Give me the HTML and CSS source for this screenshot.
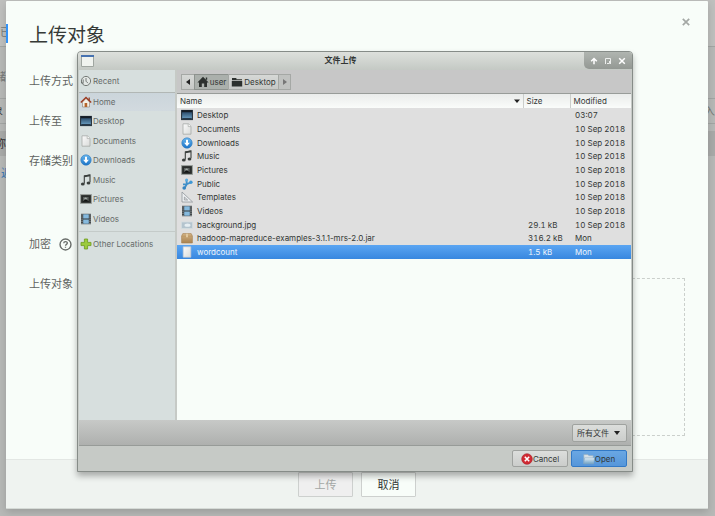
FILE: index.html
```html
<!DOCTYPE html>
<html lang="zh-CN">
<head>
<meta charset="utf-8">
<title>上传对象</title>
<link rel="stylesheet" href="styles.css">
</head>
<body>
<svg class="defs" aria-hidden="true">
  <defs>
    <linearGradient id="g-blue" x1="0" y1="0" x2="0" y2="1"><stop offset="0" stop-color="#67b6ee"/><stop offset="1" stop-color="#1b73c8"/></linearGradient>
    <linearGradient id="g-screen" x1="0" y1="0" x2="0" y2="1"><stop offset="0" stop-color="#1d3a58"/><stop offset="1" stop-color="#72a8cc"/></linearGradient>
    <linearGradient id="g-paper" x1="0" y1="0" x2="1" y2="1"><stop offset="0" stop-color="#fbfbfb"/><stop offset="1" stop-color="#d9dbd9"/></linearGradient>
    <linearGradient id="g-box" x1="0" y1="0" x2="0" y2="1"><stop offset="0" stop-color="#d2b284"/><stop offset="1" stop-color="#a98250"/></linearGradient>
    <linearGradient id="g-folder" x1="0" y1="0" x2="0" y2="1"><stop offset="0" stop-color="#e4eef4"/><stop offset="1" stop-color="#6ea3c8"/></linearGradient>
    <symbol id="i-recent" viewBox="0 0 12 12"><circle cx="6" cy="6" r="4.6" fill="#e4e8e6" stroke="#757a77"/><path d="M6 3v3.2l2 2M3.2 4.4v3.4M1 7.5l2.6.8" fill="none" stroke="#5b605d" stroke-width=".8"/></symbol>
    <symbol id="i-home" viewBox="0 0 12 12"><path d="M2.5 6v5h7V6L6 2.4z" fill="#f4efe6" stroke="#8c7b70" stroke-width=".6"/><path d="M8.6 1.5h1.2v3H8.6z" fill="#8b3a24"/><path d="M.8 6.6 6 1.4l5.2 5.2" fill="none" stroke="#9c3b22" stroke-width="1.4"/><path d="M4.6 7h2.6v4H4.6z" fill="#b5642c"/></symbol>
    <symbol id="i-desktop" viewBox="0 0 12 12"><rect x=".6" y="1.4" width="10.8" height="9.2" fill="url(#g-screen)" stroke="#1e2a35"/><path d="M1 1.2h10v2H1z" fill="#151d26"/><path d="M1.2 9h9.6v1.2H1.2z" fill="#26394a"/></symbol>
    <symbol id="i-doc" viewBox="0 0 12 12"><path d="M2 .8h5.4L10 3.4v7.8H2z" fill="url(#g-paper)" stroke="#a6aaa7" stroke-width=".8"/><path d="M7.2.9v2.7h2.7" fill="#fff" stroke="#a6aaa7" stroke-width=".7"/></symbol>
    <symbol id="i-download" viewBox="0 0 12 12"><circle cx="6" cy="6" r="5.2" fill="url(#g-blue)" stroke="#2c79be" stroke-width=".6"/><path d="M5 2.8h2v3h1.9L6 9.2 3.1 5.8H5z" fill="#fff"/></symbol>
    <symbol id="i-music" viewBox="0 0 12 12"><path d="M4.3 9.6V2L10 .9v7.4" fill="none" stroke="#3a3f3d" stroke-width="1.1"/><path d="M4.3 2.4 10 1.3" stroke="#3a3f3d" stroke-width="1.8"/><ellipse cx="2.8" cy="10" rx="1.9" ry="1.5" fill="#3a3f3d"/><ellipse cx="8.5" cy="8.9" rx="1.9" ry="1.5" fill="#3a3f3d"/></symbol>
    <symbol id="i-pic" viewBox="0 0 12 12"><rect x=".6" y="1.6" width="10.8" height="8.8" fill="#2a2d2c" stroke="#9ba09d"/><path d="M3 4h5.6v4H3z" fill="#5a605e"/><circle cx="5.6" cy="5.6" r="1.2" fill="#a5aba8"/><path d="m2.6 8.6 3-2.4 3.6 2.4z" fill="#101211"/></symbol>
    <symbol id="i-public" viewBox="0 0 12 12"><path d="M3.4 10.4 5.8 6.2 10 4.2M5.4 1.6 5.8 6.2M2 6.4l3.8-.2" fill="none" stroke="#3f8fc9" stroke-width="1.8"/><circle cx="5.6" cy="1.9" r="1.5" fill="#5aaee3"/><circle cx="9.9" cy="4.2" r="1.7" fill="#3f97d4"/><circle cx="3.2" cy="10" r="1.8" fill="#3584c0"/></symbol>
    <symbol id="i-template" viewBox="0 0 12 12"><path d="M1 1v10h10.6z" fill="#eceef0" stroke="#8f959b" stroke-width=".8"/><path d="M3.4 6v3h3.3z" fill="#dfdfdf" stroke="#8f959b" stroke-width=".7"/></symbol>
    <symbol id="i-video" viewBox="0 0 12 12"><path d="M1 .8h10v10.4H1z" fill="#343a3d"/><path d="M3.2 1.2h5.6v4.2H3.2zM3.2 6.4h5.6v4.4H3.2z" fill="#86bade"/><path d="M2 1.4v9.6M10 1.4v9.6" stroke="#d5dadb" stroke-width=".9" stroke-dasharray="1.1 1"/></symbol>
    <symbol id="i-image" viewBox="0 0 12 12"><rect x=".5" y="3" width="11" height="6.4" fill="#b4c4ce" stroke="#d3dce0" stroke-width=".8"/><ellipse cx="6.5" cy="6.2" rx="3" ry="1.6" fill="#e6eef2"/></symbol>
    <symbol id="i-jar" viewBox="0 0 12 12"><path d="M1.8 1.6h8.4L11.4 4v7H.6V4z" fill="url(#g-box)" stroke="#a5804f" stroke-width=".6"/><path d="M.8 4.2h10.4" stroke="#b9935f" stroke-width=".7"/><path d="M5 1.7h2v3.6H5z" fill="#e0c79e"/></symbol>
    <symbol id="i-file" viewBox="0 0 12 12"><path d="M2.2.8h7.6v10.4H2.2z" fill="url(#g-paper)" stroke="#c5ccd2" stroke-width=".7"/></symbol>
    <symbol id="i-plus" viewBox="0 0 12 12"><path d="M4.4 1h3.2v3.4H11v3.2H7.6V11H4.4V7.6H1V4.4h3.4z" fill="#9ccb3c" stroke="#6c9a1c" stroke-width=".8"/></symbol>
    <symbol id="i-house" viewBox="0 0 12 12"><path d="M6 .8 11.6 6.4H10V11H7.2V7.6H4.8V11H2V6.4H.4zM8.8 1.4h1.4v2.4H8.8z" fill="#2c302e"/></symbol>
    <symbol id="i-folder" viewBox="0 0 12 12"><path d="M1 2h4.4v1.2H11v1H1zM.8 5h10.4v5.6H.8z" fill="#2c302e"/></symbol>
    <symbol id="i-cancel" viewBox="0 0 12 12"><circle cx="6" cy="6" r="5.3" fill="#d12a33" stroke="#a81d26" stroke-width=".6"/><path d="m3.8 3.8 4.4 4.4m0-4.4L3.8 8.2" stroke="#fff" stroke-width="1.6"/></symbol>
    <symbol id="i-open" viewBox="0 0 12 12"><path d="M.8 1.4h4l1 1.2h4.4v8H.8z" fill="#d5dfe5" stroke="#8ba9bf" stroke-width=".6"/><path d="M1.6 4.8h10l-.8 6H.9z" fill="url(#g-folder)" stroke="#78a1c0" stroke-width=".5"/></symbol>
  </defs>
</svg>

<div class="page" aria-hidden="true">
  <div class="page-row page-tabs"><span>已</span></div>
  <div class="page-row page-info"><span>储</span></div>
  <div class="page-row page-nav"><span>象</span><span class="page-end">入</span></div>
  <div class="page-row page-head"><span>称</span></div>
  <div class="page-row page-link"><span>返</span></div>
</div>

<section class="modal" aria-labelledby="modal-title">
  <div class="modal-body">
    <header class="modal-header">
      <h1 id="modal-title">上传对象</h1>
      <button class="modal-close" type="button" aria-label="关闭"><svg viewBox="0 0 8 8"><path d="m.8.8 6.4 6.4m0-6.4L.8 7.2" stroke="#a4a8a5" stroke-width="1.7"/></svg></button>
    </header>
    <div class="form-row">上传方式</div>
    <div class="form-row">上传至</div>
    <div class="form-row form-row-class">存储类别</div>
    <div class="form-row">加密
      <svg class="help" viewBox="0 0 14 14"><circle cx="7" cy="7" r="5.9" fill="none" stroke="#686c69" stroke-width="1.5"/><path d="M5.1 5.7c0-2.5 3.9-2.4 3.9-.2C9 6.9 7 6.9 7 8.4M7 9.3v1.3" fill="none" stroke="#686c69" stroke-width="1.4"/></svg>
    </div>
    <div class="form-row form-drop"><span>上传对象</span><div class="drop-zone"></div></div>
  </div>
  <footer class="modal-footer">
    <button class="action" type="button" disabled>上传</button>
    <button class="action" type="button">取消</button>
  </footer>
</section>

<section class="window" aria-labelledby="window-title">
  <header class="titlebar">
    <svg class="app-icon" viewBox="0 0 13 12"><path d="M.5.5h12v11H.5z" fill="#f0f3ef" stroke="#a0a6a1"/><path d="M0 0h13v2H0z" fill="#4672b0"/></svg>
    <h2 id="window-title">文件上传</h2>
    <div class="window-controls">
      <button type="button" aria-label="收起"><svg viewBox="0 0 8 8"><path d="M4 1.3v6M1.2 4.2 4 1.5l2.8 2.7" fill="none" stroke="#fff" stroke-width="1.5"/></svg></button>
      <button type="button" aria-label="最大化"><svg viewBox="0 0 8 8"><path d="M1.5 7V1.5h5V7M3 6.5h2.5V4" fill="none" stroke="#eceeec"/></svg></button>
      <button type="button" aria-label="关闭"><svg viewBox="0 0 8 8"><path d="m1.2 1.2 5.6 5.6m0-5.6L1.2 6.8" stroke="#fff" stroke-width="1.5"/></svg></button>
    </div>
  </header>
  <div class="browser">
    <nav class="places">
      <a class="place place-recent" href="#"><svg><use href="#i-recent"/></svg>Recent</a>
      <a class="place place-current" href="#"><svg><use href="#i-home"/></svg>Home</a>
      <a class="place" href="#"><svg><use href="#i-desktop"/></svg>Desktop</a>
      <a class="place" href="#"><svg><use href="#i-doc"/></svg>Documents</a>
      <a class="place" href="#"><svg><use href="#i-download"/></svg>Downloads</a>
      <a class="place" href="#"><svg><use href="#i-music"/></svg>Music</a>
      <a class="place" href="#"><svg><use href="#i-pic"/></svg>Pictures</a>
      <a class="place" href="#"><svg><use href="#i-video"/></svg>Videos</a>
      <a class="place place-other" href="#"><svg><use href="#i-plus"/></svg>Other Locations</a>
    </nav>
    <div class="files">
      <div class="pathbar">
        <button class="step" type="button" aria-label="后退"><svg class="tri" viewBox="0 0 6 6"><path d="M5 0v6L1 3z" fill="#222"/></svg></button>
        <button class="crumb crumb-active" type="button"><svg><use href="#i-house"/></svg>user</button>
        <button class="crumb" type="button"><svg><use href="#i-folder"/></svg>Desktop</button>
        <button class="step step-off" type="button" aria-label="前进"><svg class="tri" viewBox="0 0 6 6"><path d="M1 0v6l4-3z" fill="#777"/></svg></button>
      </div>
      <table>
        <colgroup><col><col class="col-size"><col class="col-date"></colgroup>
        <thead><tr><th><div class="sort">Name<svg class="tri" viewBox="0 0 6 6"><path d="M0 1.5h6L3 5z" fill="#222"/></svg></div></th><th>Size</th><th>Modified</th></tr></thead>
        <tbody>
          <tr><td><div class="name"><svg><use href="#i-desktop"/></svg>Desktop</div></td><td></td><td>03:07</td></tr>
          <tr><td><div class="name"><svg><use href="#i-doc"/></svg>Documents</div></td><td></td><td>10 Sep 2018</td></tr>
          <tr><td><div class="name"><svg><use href="#i-download"/></svg>Downloads</div></td><td></td><td>10 Sep 2018</td></tr>
          <tr><td><div class="name"><svg><use href="#i-music"/></svg>Music</div></td><td></td><td>10 Sep 2018</td></tr>
          <tr><td><div class="name"><svg><use href="#i-pic"/></svg>Pictures</div></td><td></td><td>10 Sep 2018</td></tr>
          <tr><td><div class="name"><svg><use href="#i-public"/></svg>Public</div></td><td></td><td>10 Sep 2018</td></tr>
          <tr><td><div class="name"><svg><use href="#i-template"/></svg>Templates</div></td><td></td><td>10 Sep 2018</td></tr>
          <tr><td><div class="name"><svg><use href="#i-video"/></svg>Videos</div></td><td></td><td>10 Sep 2018</td></tr>
          <tr><td><div class="name"><svg><use href="#i-image"/></svg>background.jpg</div></td><td>29.1 kB</td><td>10 Sep 2018</td></tr>
          <tr><td><div class="name"><svg><use href="#i-jar"/></svg>hadoop-mapreduce-examples-3.1.1-mrs-2.0.jar</div></td><td>316.2 kB</td><td>Mon</td></tr>
          <tr class="selected"><td><div class="name"><svg><use href="#i-file"/></svg>wordcount</div></td><td>1.5 kB</td><td>Mon</td></tr>
        </tbody>
      </table>
    </div>
  </div>
  <div class="filterbar">
    <div class="filter"><select aria-label="文件类型"><option>所有文件</option></select><svg class="tri" viewBox="0 0 6 6"><path d="M0 1h6L3 5z" fill="#222"/></svg></div>
  </div>
  <footer class="window-footer">
    <button class="dialog-button" type="button"><svg><use href="#i-cancel"/></svg>Cancel</button>
    <button class="dialog-button dialog-primary" type="button"><svg><use href="#i-open"/></svg>Open</button>
  </footer>
</section>
</body>
</html>
```
FILE: styles.css
```css
* { box-sizing: border-box; }

html, body { height: 100%; }

body {
  margin: 0;
  position: relative;
  overflow: hidden;
  background: #b7b9b7;
  color: #5f6360;
  font: 11px/16px "Liberation Sans", "Noto Sans CJK SC", sans-serif;
}

h1, h2 { margin: 0; font-weight: 400; }
button, select { font: inherit; color: inherit; margin: 0; padding: 0; border: 0; background: none; }
a { color: inherit; text-decoration: none; }
svg { display: block; flex: none; }
.defs { position: absolute; width: 0; height: 0; }

/* Page behind the modal */
.page { color: #777a78; }
.page-row { display: flex; align-items: center; border-bottom: 1px solid #a3a6a4; }
.page-row span { margin-left: -5px; }
.page-row .page-end { margin: 0 0 0 auto; }
.page-tabs { height: 47px; padding-top: 18px; background: #bfc0be; }
.page-tabs span { margin-left: 0; }
.page-info { height: 52px; padding-top: 8px; }
.page-nav { height: 25px; color: #333; }
.page-nav span { margin-left: -8px; }
.page-nav .page-end { color: #777a78; }
.page-head { height: 25px; margin-top: 7px; border: 0; background: #a9aba9; color: #333; }
.page-link { height: 34px; border: 0; color: #3274b5; }
.page-link span { margin-left: 1px; }

/* Upload modal */
.modal {
  position: absolute;
  inset: 1px 7px 7px 6px;
  display: flex;
  flex-direction: column;
  background: #f8fdf9;
  border-bottom: 1px solid #d5dad6;
  border-radius: 1px;
  box-shadow: 0 3px 8px rgba(0, 0, 0, .16);
}
.modal::before {
  content: "";
  position: absolute;
  left: 0;
  top: 23px;
  width: 2px;
  height: 19px;
  background: #3293f8;
}
.modal-body { flex: 1; display: flex; flex-direction: column; padding: 13px 23px 23px; }
.modal-header { display: flex; justify-content: space-between; margin-bottom: 15px; }
.modal-header h1 { padding-top: 8px; color: #363a37; font-size: 19px; line-height: 28px; }
.modal-close { width: 16px; height: 16px; margin-right: -9px; padding: 4px; }
.modal-close svg { width: 8px; height: 8px; }
.form-row { display: flex; gap: 8px; height: 40px; line-height: 32px; }
.form-row-class { height: 83px; }
.help { width: 13px; height: 13px; margin-top: 10px; }
.form-drop { flex: 1; height: auto; gap: 28px; }
.drop-zone { flex: 1; margin-top: 10px; border: 1px dashed #cbd0cc; }
.modal-footer {
  display: flex;
  justify-content: center;
  align-items: flex-start;
  gap: 8px;
  height: 49px;
  padding-top: 12px;
  background: #eff3f0;
  border-top: 1px solid #e3e7e4;
}
.action { width: 55px; height: 25px; border: 1px solid #cdd0ce; border-radius: 1px; background: #f8fdf9; color: #333735; }
.action:disabled { background: #efefef; color: #a4a7a5; }

/* File chooser window */
.window {
  position: absolute;
  inset: 51px 82px 44px 77px;
  display: flex;
  flex-direction: column;
  padding: 0 1px;
  border: 1px solid #868c88;
  border-radius: 4px 4px 0 0;
  background: #c6cac6;
  color: #333735;
  font: 8px/12px Inter, "Liberation Sans", "Noto Sans CJK SC", sans-serif;
  box-shadow: 0 4px 6px rgba(0, 0, 0, .3);
}
.window svg { width: 12px; height: 12px; }
.window .tri { width: 6px; height: 6px; }
.titlebar {
  display: grid;
  grid-template-columns: auto 1fr auto;
  height: 18px;
  margin: 0 -1px;
  background: linear-gradient(#dde0dc, #c4c9c4);
  border-radius: 3px 3px 0 0;
}
.window .app-icon { width: 13px; margin: 3px; }
.titlebar h2 { font-size: 8px; font-weight: 700; line-height: 17px; text-align: center; }
.window-controls {
  display: flex;
  justify-content: center;
  gap: 6px;
  width: 48px;
  height: 17px;
  padding-top: 5px;
  border-radius: 0 3px 0 5px;
  background: linear-gradient(#b0b5b0, #939893);
}
.window-controls button, .window .window-controls svg { width: 8px; height: 8px; }
.browser { flex: 1; display: flex; gap: 2px; min-height: 0; }

.places { width: 96px; background: #d7dfde; color: #666b69; }
.place { display: flex; align-items: center; gap: 1px; height: 20px; padding-left: 1px; }
.place:nth-child(even) { height: 19px; }
.place.place-recent { height: 23px; border-bottom: 1px solid #b1b7b5; }
.place.place-current { height: 18px; background: linear-gradient(#cbd5db, #d2dadf); }
.place.place-other { height: 25px; margin-top: 3px; border-top: 1px solid #c4cbc9; }

.files { flex: 1; display: flex; flex-direction: column; background: #f8fdf9; min-width: 0; }
.pathbar { display: flex; height: 24px; padding: 4px; background: #c7c7c7; border-bottom: 1px solid #989c99; }
.pathbar button {
  display: flex;
  align-items: center;
  justify-content: center;
  gap: 1px;
  height: 16px;
  border: 1px solid #a5a8a5;
  border-right: 0;
  background: linear-gradient(#d6d8d6, #c6c8c6);
}
.pathbar .step { width: 13px; }
.pathbar .crumb { width: 50px; }
.pathbar .crumb-active { width: 34px; background: #abb0ac; border-color: #8d928e; }
.pathbar .step-off { border-right: 1px solid #a5a8a5; background: #c0c2c0; }

table { width: 100%; table-layout: fixed; border-collapse: collapse; }
.col-size { width: 47px; }
.col-date { width: 61px; }
th { height: 14px; padding: 0 3px; background: linear-gradient(#eaeceb, #fafcfa); font-weight: 400; text-align: left; }
th + th { border-left: 1px solid #cbcecb; }
.sort { display: flex; align-items: center; justify-content: space-between; }
tbody tr { height: 14px; background: #dfdfdf; }
tbody tr:nth-child(3n) { height: 13px; }
tbody .selected { background: linear-gradient(#5aa5f2, #3787df); color: #eef5fc; }
td { padding: 0 0 0 5px; line-height: 12px; white-space: nowrap; }
td:first-child { padding-left: 4px; }
td + td { font-variant-numeric: tabular-nums; }
.name { display: flex; align-items: center; gap: 4px; }

.filterbar {
  display: flex;
  justify-content: flex-end;
  height: 26px;
  padding: 4px;
  background: linear-gradient(#c7c9c7, #aeb0ae);
  border-bottom: 1px solid #979b98;
}
.filter {
  display: flex;
  align-items: center;
  width: 55px;
  height: 18px;
  padding-right: 6px;
  border: 1px solid #9fa29f;
  border-radius: 2px;
  background: linear-gradient(#dcdedc, #cbcdcb);
}
.filter select { flex: 1; min-width: 0; padding-left: 4px; appearance: none; }
.window-footer { display: flex; justify-content: flex-end; gap: 3px; height: 25px; padding: 4px; }
.dialog-button {
  display: flex;
  align-items: center;
  justify-content: center;
  width: 56px;
  height: 17px;
  border: 1px solid #9fa29f;
  border-radius: 2px;
  background: linear-gradient(#dcdedc, #cbcdcb);
}
.dialog-primary { border-color: #3279c6; background: linear-gradient(#6aa7e3, #5596da); }
```
